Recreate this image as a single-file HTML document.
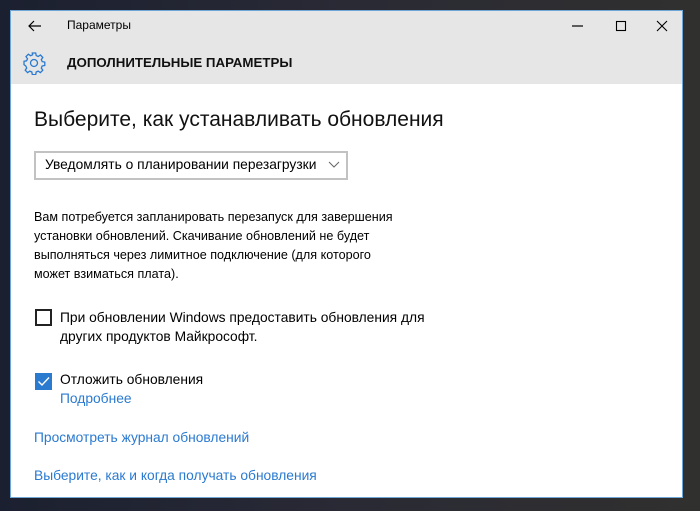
<!DOCTYPE html>
<html><head><meta charset="utf-8"><style>
*{margin:0;padding:0;box-sizing:border-box}
body{width:700px;height:511px;overflow:hidden;background:linear-gradient(90deg,#1b2030 0%,#2a2a35 50%,#30302f 100%);font-family:"Liberation Sans",sans-serif;position:relative}
.win{position:absolute;left:10px;top:10px;width:673px;height:488px;background:#fff;border:1px solid #6ea6d8}
.hdr{position:absolute;left:0;top:0;width:100%;height:73px;background:#e6e6e6}
.t{position:absolute;white-space:nowrap;color:#000}
.p{font-size:13.5px}
.link{color:#2a7ad0;font-size:13.8px}
</style></head><body>
<div class="win">
<div class="hdr"></div>
<svg style="position:absolute;left:17px;top:8px" width="14" height="14" viewBox="0 0 14 14"><path d="M13 7H1M6 2L1 7l5 5" stroke="#000" stroke-width="1.2" fill="none"/></svg>
<div class="t" style="left:56px;top:7px;font-size:12px">Параметры</div>
<svg style="position:absolute;left:561px;top:8px" width="100" height="14" viewBox="0 0 100 14"><path d="M0 7h11" stroke="#000" stroke-width="1.2"/><rect x="44.5" y="2.5" width="9" height="9" fill="none" stroke="#000" stroke-width="1.1"/><path d="M85 2l10 10M95 2L85 12" stroke="#000" stroke-width="1.1"/></svg>
<svg style="position:absolute;left:11px;top:40px" width="24" height="24" viewBox="0 0 24 24"><g fill="none" stroke="#2a7ad0" stroke-width="1.3"><circle cx="12" cy="12" r="3.5"/><path d="M10.3 2h3.4l.5 2.6 2 .9 2.2-1.5 2.4 2.4-1.5 2.2.9 2 2.6.5v3.4l-2.6.5-.9 2 1.5 2.2-2.4 2.4-2.2-1.5-2 .9-.5 2.6h-3.4l-.5-2.6-2-.9-2.2 1.5-2.4-2.4 1.5-2.2-.9-2L2 13.7v-3.4l2.6-.5.9-2L4 5.6 6.4 3.2l2.2 1.5 2-.9z"/></g></svg>
<div class="t" style="left:56px;top:44px;font-size:13.3px;font-weight:bold;color:#111">ДОПОЛНИТЕЛЬНЫЕ ПАРАМЕТРЫ</div>
<div class="t" style="left:23px;top:97px;font-size:21px;color:#111">Выберите, как устанавливать обновления</div>
<div style="position:absolute;left:23px;top:140px;width:314px;height:29px;border:2px solid #c2c2c2"></div>
<div class="t" style="left:34px;top:146px;font-size:13.8px">Уведомлять о планировании перезагрузки</div>
<svg style="position:absolute;left:317px;top:150px" width="12" height="8" viewBox="0 0 12 8"><path d="M1 1l5 5 5-5" stroke="#666" fill="none"/></svg>
<div class="t" style="left:23px;top:197px;line-height:19px;font-size:12.6px">Вам потребуется запланировать перезапуск для завершения<br>установки обновлений. Скачивание обновлений не будет<br>выполняться через лимитное подключение (для которого<br>может взиматься плата).</div>
<div style="position:absolute;left:24px;top:298px;width:17px;height:17px;border:2px solid #222"></div>
<div class="t" style="left:49px;top:297px;line-height:19px;font-size:13.8px">При обновлении Windows предоставить обновления для<br>других продуктов Майкрософт.</div>
<div style="position:absolute;left:24px;top:362px;width:17px;height:17px;background:#2a7ad0"></div>
<svg style="position:absolute;left:24px;top:362px" width="17" height="17" viewBox="0 0 17 17"><path d="M3.5 8.5l3.5 3.5 7-7.5" stroke="#fff" stroke-width="1.4" fill="none"/></svg>
<div class="t" style="left:49px;top:361px;font-size:13.8px">Отложить обновления</div>
<div class="t link" style="left:49px;top:380px">Подробнее</div>
<div class="t link" style="left:23px;top:419px">Просмотреть журнал обновлений</div>
<div class="t link" style="left:23px;top:457px">Выберите, как и когда получать обновления</div>
</div>
</body></html>
